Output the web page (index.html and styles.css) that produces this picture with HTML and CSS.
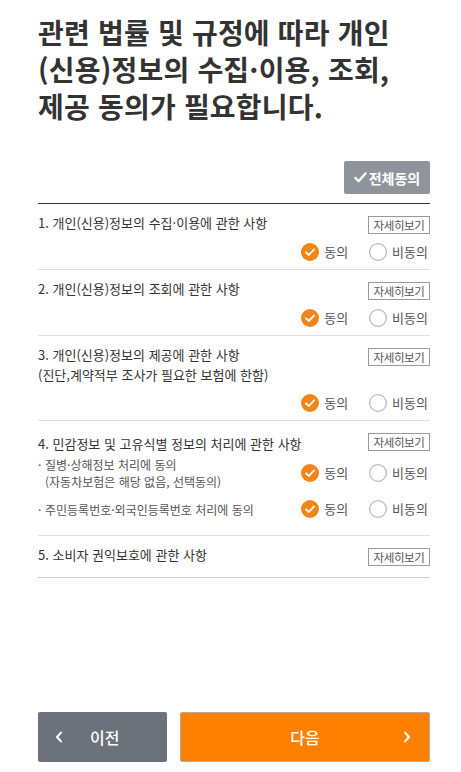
FILE: index.html
```html
<!DOCTYPE html>
<html lang="ko">
<head>
<meta charset="utf-8">
<link rel="stylesheet" href="styles.css">
</head>
<body>
<div class="page">
  <main class="main">
    <h1 class="title">관련 법률 및 규정에 따라 개인<br>(신용)정보의 수집·이용, 조회,<br>제공 동의가 필요합니다.</h1>

    <div class="all-row">
      <button class="all-btn"><svg class="all-check" viewBox="0 0 14 14" width="13" height="13"><path d="M1.5 7.5 L5 11 L12.5 2.5" fill="none" stroke="#fff" stroke-width="2.4" stroke-linecap="round" stroke-linejoin="round"/></svg>전체동의</button>
    </div>

    <section class="list">
      <div class="item">
        <div class="head">
          <p class="item-title">1. 개인(신용)정보의 수집·이용에 관한 사항</p>
          <button class="detail">자세히보기</button>
        </div>
        <div class="radios">
          <span class="opt"><svg class="rd" viewBox="0 0 18 18"><circle cx="9" cy="9" r="9" fill="#f0861a"/><path d="M5 9.3 L7.9 12 L13 6.4" fill="none" stroke="#fff" stroke-width="1.8" stroke-linecap="round" stroke-linejoin="round"/></svg>동의</span>
          <span class="opt"><svg class="rd" viewBox="0 0 18 18"><circle cx="9" cy="9" r="8.4" fill="#fff" stroke="#b9b9b9" stroke-width="1.2"/></svg>비동의</span>
        </div>
      </div>

      <div class="item">
        <div class="head">
          <p class="item-title">2. 개인(신용)정보의 조회에 관한 사항</p>
          <button class="detail">자세히보기</button>
        </div>
        <div class="radios">
          <span class="opt"><svg class="rd" viewBox="0 0 18 18"><circle cx="9" cy="9" r="9" fill="#f0861a"/><path d="M5 9.3 L7.9 12 L13 6.4" fill="none" stroke="#fff" stroke-width="1.8" stroke-linecap="round" stroke-linejoin="round"/></svg>동의</span>
          <span class="opt"><svg class="rd" viewBox="0 0 18 18"><circle cx="9" cy="9" r="8.4" fill="#fff" stroke="#b9b9b9" stroke-width="1.2"/></svg>비동의</span>
        </div>
      </div>

      <div class="item">
        <div class="head">
          <p class="item-title">3. 개인(신용)정보의 제공에 관한 사항<br>(진단,계약적부 조사가 필요한 보험에 한함)</p>
          <button class="detail">자세히보기</button>
        </div>
        <div class="radios">
          <span class="opt"><svg class="rd" viewBox="0 0 18 18"><circle cx="9" cy="9" r="9" fill="#f0861a"/><path d="M5 9.3 L7.9 12 L13 6.4" fill="none" stroke="#fff" stroke-width="1.8" stroke-linecap="round" stroke-linejoin="round"/></svg>동의</span>
          <span class="opt"><svg class="rd" viewBox="0 0 18 18"><circle cx="9" cy="9" r="8.4" fill="#fff" stroke="#b9b9b9" stroke-width="1.2"/></svg>비동의</span>
        </div>
      </div>

      <div class="item item-sub">
        <div class="head">
          <p class="item-title title-low">4. 민감정보 및 고유식별 정보의 처리에 관한 사항</p>
          <button class="detail">자세히보기</button>
        </div>
        <div class="sub">
          <p class="sub-text"><span class="dot">·</span>질병·상해정보 처리에 동의<br>(자동차보험은 해당 없음, 선택동의)</p>
          <div class="radios radios-inline">
            <span class="opt"><svg class="rd" viewBox="0 0 18 18"><circle cx="9" cy="9" r="9" fill="#f0861a"/><path d="M5 9.3 L7.9 12 L13 6.4" fill="none" stroke="#fff" stroke-width="1.8" stroke-linecap="round" stroke-linejoin="round"/></svg>동의</span>
            <span class="opt"><svg class="rd" viewBox="0 0 18 18"><circle cx="9" cy="9" r="8.4" fill="#fff" stroke="#b9b9b9" stroke-width="1.2"/></svg>비동의</span>
          </div>
        </div>
        <div class="sub sub-second">
          <p class="sub-text"><span class="dot">·</span>주민등록번호·외국인등록번호 처리에 동의</p>
          <div class="radios radios-inline">
            <span class="opt"><svg class="rd" viewBox="0 0 18 18"><circle cx="9" cy="9" r="9" fill="#f0861a"/><path d="M5 9.3 L7.9 12 L13 6.4" fill="none" stroke="#fff" stroke-width="1.8" stroke-linecap="round" stroke-linejoin="round"/></svg>동의</span>
            <span class="opt"><svg class="rd" viewBox="0 0 18 18"><circle cx="9" cy="9" r="8.4" fill="#fff" stroke="#b9b9b9" stroke-width="1.2"/></svg>비동의</span>
          </div>
        </div>
      </div>

      <div class="item item-last">
        <div class="head">
          <p class="item-title">5. 소비자 권익보호에 관한 사항</p>
          <button class="detail">자세히보기</button>
        </div>
      </div>
    </section>
  </main>

  <footer class="footer">
    <button class="btn btn-prev"><svg class="chev" viewBox="0 0 10 14" width="8" height="12"><path d="M7.5 1.5 L2.5 7 L7.5 12.5" fill="none" stroke="#fff" stroke-width="2.6" stroke-linecap="round" stroke-linejoin="round"/></svg><span class="btn-label">이전</span></button>
    <button class="btn btn-next"><span class="btn-label">다음</span><svg class="chev chev-r" viewBox="0 0 10 14" width="8" height="12"><path d="M2.5 1.5 L7.5 7 L2.5 12.5" fill="none" stroke="#fff" stroke-width="2.6" stroke-linecap="round" stroke-linejoin="round"/></svg></button>
  </footer>
</div>
</body>
</html>
```

FILE: styles.css
```css
* { box-sizing: border-box; }
html, body { margin: 0; padding: 0; background: #fff; }
body {
  font-family: "Noto Sans CJK KR", "Noto Sans", sans-serif;
  color: #333;
}
p { margin: 0; }
button { font-family: inherit; cursor: pointer; }

.page {
  min-height: 772px;
  display: flex;
  flex-direction: column;
  padding: 0 31px 10px 38px;
}
.main { flex: 1; }

.title {
  margin: 14px 0 0;
  font-size: 28px;
  line-height: 37px;
  font-weight: 700;
  letter-spacing: 0.2px;
  color: #333;
}

.all-row {
  display: flex;
  justify-content: flex-end;
  margin-top: 36px;
}
.all-btn {
  width: 86px;
  height: 33px;
  border: none;
  border-radius: 2px;
  background: #8f949c;
  color: #fff;
  font-size: 14px;
  font-weight: 700;
  display: flex;
  align-items: center;
  justify-content: center;
  gap: 2px;
  padding: 0;
}
.all-check { display: block; }

.list {
  margin-top: 9px;
  border-top: 1px solid #333;
}
.item {
  padding: 9px 0 8px;
  border-bottom: 1px solid #dedede;
}
.item-last { padding-bottom: 11px; border-bottom-color: #cfcfcf; }
.item-sub { padding-bottom: 17px; }

.head {
  display: flex;
  justify-content: space-between;
  align-items: flex-start;
}
.item-title {
  font-size: 13px;
  line-height: 20px;
  color: #333;
}
.title-low { margin-top: 4px; }

.detail {
  margin-top: 3px;
  width: 62px;
  height: 18px;
  padding: 0;
  border: 1px solid #9a9a9a;
  background: #fff;
  color: #555;
  font-size: 11.5px;
  line-height: 16px;
  letter-spacing: -0.4px;
  flex-shrink: 0;
}

.radios {
  display: flex;
  justify-content: flex-end;
  gap: 21px;
  margin-top: 9px;
  padding-right: 2px;
}
.radios-inline { margin-top: 0; }
.opt {
  display: flex;
  align-items: center;
  gap: 5px;
  font-size: 13px;
  line-height: 18px;
  color: #555;
}
.rd { width: 18px; height: 18px; display: block; }

.sub {
  display: flex;
  justify-content: space-between;
  align-items: center;
  margin-top: 2px;
}
.sub-second { margin-top: 10px; }
.sub-text {
  font-size: 12px;
  line-height: 17px;
  color: #555;
  padding-left: 7px;
  position: relative;
}
.dot {
  position: absolute;
  left: 0;
  top: 0;
}

.footer {
  display: flex;
  gap: 13px;
}
.btn {
  height: 50px;
  border-radius: 2px;
  color: #fff;
  font-size: 16px;
  font-weight: 500;
  display: flex;
  align-items: center;
  padding: 0;
}
.btn-prev {
  width: 129px;
  border: none;
  background: #6b727b;
  padding-left: 17px;
}
.btn-prev .btn-label { margin-left: 27px; }
.btn-next {
  flex: 1;
  background: #ff7f00;
  border: 1px solid #b9aa9c;
  justify-content: center;
  position: relative;
}
.chev { display: block; }
.chev-r {
  position: absolute;
  right: 18px;
  top: 18px;
}
```
